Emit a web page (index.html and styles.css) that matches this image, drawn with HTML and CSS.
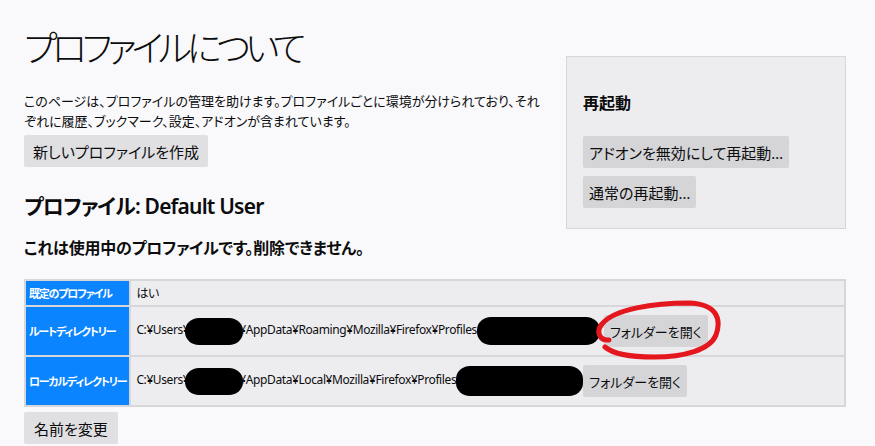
FILE: index.html
```html
<!DOCTYPE html>
<html lang="ja">
<head>
<meta charset="utf-8">
<title>プロファイルについて</title>
<link rel="stylesheet" href="styles.css">
</head>
<body>
<div class="page">
  <aside class="action-box">
    <h3 class="action-title">再起動</h3>
    <button class="btn block">アドオンを無効にして再起動…</button>
    <button class="btn block">通常の再起動…</button>
  </aside>
  <h1 class="title">プロファイルについて</h1>
  <p class="intro">このページは、プロファイルの管理を助けます。プロファイルごとに環境が分けられており、それぞれに履歴、ブックマーク、設定、アドオンが含まれています。</p>
  <button class="btn wide">新しいプロファイルを作成</button>
  <h2 class="profile-name">プロファイル: Default User</h2>
  <h3 class="profile-note">これは使用中のプロファイルです。削除できません。</h3>
  <table class="profile-table">
    <tr class="row-short">
      <th>既定のプロファイル</th>
      <td>はい</td>
    </tr>
    <tr class="row-tall">
      <th>ルートディレクトリー</th>
      <td>C:¥Users¥<span class="blob b1"></span>¥AppData¥Roaming¥Mozilla¥Firefox¥Profiles<span class="blob b2"></span><span class="marked"><button class="btn small">フォルダーを開く</button><svg class="circle" viewBox="0 0 128 62" width="128" height="62"><path d="M15 40 C5 41 2 31 8 24 C20 9 60 3 95 3 C122 4 128 18 122 35 C116 50 90 57 60 57 C36 57 19 54 11 47" fill="none" stroke="#e3171d" stroke-width="5" stroke-linecap="round"/></svg></span></td>
    </tr>
    <tr class="row-tall">
      <th>ローカルディレクトリー</th>
      <td>C:¥Users¥<span class="blob b1"></span>¥AppData¥Local¥Mozilla¥Firefox¥Profiles<span class="blob b3"></span><button class="btn small">フォルダーを開く</button></td>
    </tr>
  </table>
  <button class="btn rename">名前を変更</button>
</div>
</body>
</html>
```

FILE: styles.css
```css
html, body {
  margin: 0;
  padding: 0;
  background: #f9f9fb;
}
body {
  font-family: "Noto Sans", "Noto Sans CJK JP", sans-serif;
  font-feature-settings: "palt";
  color: #0c0c0d;
}
.page {
  width: 822px;
  padding: 1px 0 0 24px;
}
.action-box {
  float: right;
  width: 246px;
  margin: 55px 0 20px 24px;
  padding: 0 16px 12px 16px;
  background: #ededf0;
  border: 1px solid #d7d7db;
}
.action-title {
  font-size: 16px;
  font-weight: 600;
  line-height: 24px;
  margin: 34px 0 21px 0;
}
.btn {
  font-family: inherit;
  font-feature-settings: "palt";
  font-size: 15px;
  color: #0c0c0d;
  height: 32px;
  padding: 0 6px;
  border: none;
  border-radius: 2px;
  background: rgba(12, 12, 13, 0.1);
  vertical-align: middle;
}
.btn.block {
  display: block;
  margin-bottom: 8px;
}
.btn.wide {
  padding: 0 9px;
}
.btn.small {
  font-size: 13px;
}
.title {
  font-size: 36px;
  font-weight: 300;
  letter-spacing: -5px;
  line-height: 44px;
  margin: 26px 0 20px 0;
}
.intro {
  font-size: 13px;
  line-height: 20px;
  margin: 0 0 4px 0;
}
.profile-name {
  font-size: 21px;
  font-weight: 600;
  letter-spacing: -0.8px;
  line-height: 30px;
  margin: 24px 0 14px 0;
}
.profile-note {
  font-size: 16px;
  font-weight: 600;
  letter-spacing: -0.2px;
  line-height: 26px;
  margin: 0 0 18px 0;
}
.profile-table {
  clear: both;
  width: 822px;
  border-collapse: collapse;
  border: 2px solid #d7d7db;
}
.profile-table th {
  background: #0a84ff;
  color: #fff;
  font-size: 11px;
  font-weight: 700;
  letter-spacing: -1.2px;
  text-align: left;
  white-space: nowrap;
  padding: 0 3px;
  width: 96px;
  border: 2px solid #d7d7db;
}
.profile-table td {
  background: #ededf0;
  font-size: 12px;
  letter-spacing: -0.4px;
  padding: 0 5px;
  border: 2px solid #d7d7db;
  white-space: nowrap;
}
.row-short th, .row-short td {
  height: 24px;
}
.row-tall th, .row-tall td {
  height: 48px;
}
.blob {
  display: inline-block;
  background: #000;
  vertical-align: middle;
  border-radius: 14px / 13px;
}
.b1 {
  width: 58px;
  height: 27px;
  margin: 0 -4px;
}
.b2 {
  width: 123px;
  height: 28px;
  margin-right: 4px;
}
.b3 {
  width: 127px;
  height: 30px;
}
.marked {
  position: relative;
  display: inline-block;
  vertical-align: middle;
}
.circle {
  position: absolute;
  left: -10px;
  top: -15px;
}
.rename {
  margin-top: 5px;
  padding: 0 10px;
}
```
